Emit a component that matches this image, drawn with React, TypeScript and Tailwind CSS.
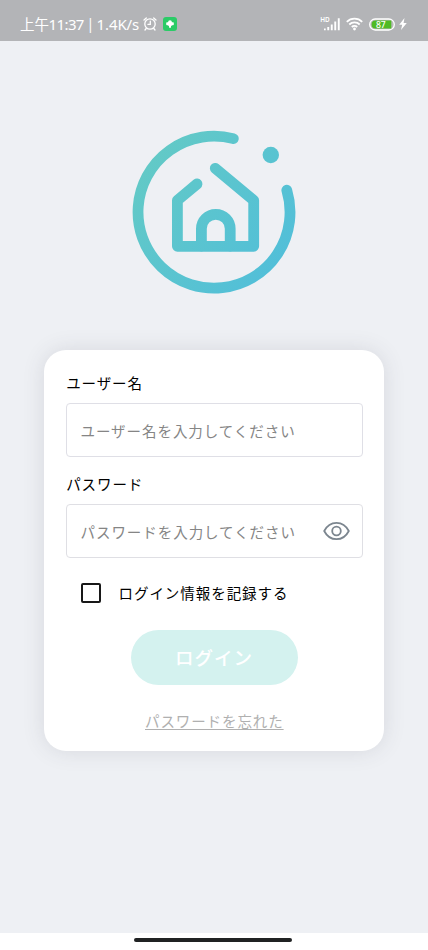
import React from "react";

function StatusBar() {
  return (
    <header className="flex h-[41px] shrink-0 items-end justify-between bg-[#b3b4b7] pr-[21px] pb-[7px] pl-5 text-white">
      <div className="flex h-5 items-center">
        <span className="flex w-[122px] items-center whitespace-nowrap font-['Noto_Sans',sans-serif] text-[15px] leading-5">
          <span className="w-[28.500px] font-['Noto_Sans_CJK_SC',sans-serif] text-[14.500px]">上午</span>
          <span className="w-[38px] tracking-[-0.6px]">11:37</span>
          <span className="w-[10px] text-[14px]">|</span>
          <span className="tracking-[-0.1px]">1.4K/s</span>
        </span>
        <svg className="ml-[1px]" width="14" height="16" viewBox="0 0 14 16" fill="none" stroke="white" strokeWidth="1.3" strokeLinecap="round">
          <circle cx="7" cy="8" r="5.2" />
          <path d="M1 4 3.3 2M13 4 10.7 2M3.2 12.5 2 14M10.8 12.5 12 14M7.3 5.2v3.2H5" />
        </svg>
        <span className="ml-[6px] flex size-[14px] items-center justify-center rounded-[3px] bg-[#2bcb67]">
          <svg width="8" height="8" viewBox="0 0 8 8" fill="white">
            <path d="M2 2.200Q2.200.300 4 .300T6 2.200H7.200Q7.800 2.200 7.800 3V4.500Q7.800 5.300 7 5.300H6Q5.800 6 5 6V7.200Q5 7.700 4.500 7.700H3.500Q3 7.700 3 7.200V6Q2.200 6 2 5.300H1Q.200 5.300.200 4.500V3Q.200 2.200 1 2.200Z" />
          </svg>
        </span>
      </div>
      <div className="flex h-5 items-center">
        <svg className="overflow-visible" width="22" height="16" viewBox="0 0 22 16" fill="white">
          <text x="0.3" y="6" fontSize="6.5" fontWeight="600" textLength="9.5" lengthAdjust="spacingAndGlyphs">HD</text>
          <path d="M4 12.500h1.700v1.700H4zM7.300 11h1.900v3.200H7.300zM10.800 8.500h1.900v5.700H10.800zM14.300 5.500h1.900v8.700H14.300zM17.800 2.200h1.900v12H17.800z" />
        </svg>
        <svg className="ml-[4px]" width="17" height="14" viewBox="0 0 17 14" fill="none" stroke="white" strokeWidth="1.8">
          <path d="M.8 4.8a11 11 0 0 1 15.4 0M3.3 7.5a7.4 7.4 0 0 1 10.4 0M5.8 10a3.8 3.8 0 0 1 5.4 0" />
          <circle cx="8.5" cy="12" r="1.4" fill="white" stroke="none" />
        </svg>
        <svg className="ml-[6px]" width="26" height="13" viewBox="0 0 26 13">
          <rect x=".7" y="1" width="24.6" height="11" rx="5.5" fill="#b8b8ba" stroke="white" strokeWidth="1.3" />
          <path d="M6.5 2.6H22.3V10.4H6.5A3.9 3.9 0 0 1 6.5 2.6Z" fill="#4fbb24" />
          <text x="7" y="9.7" fontSize="8.5" fontWeight="500" fill="white">87</text>
        </svg>
        <svg className="ml-[4px]" width="8" height="12" viewBox="0 0 8 12" fill="white">
          <path d="M5.500 0 .200 6.800h3L2 12l5.800-7H4.600Z" />
        </svg>
      </div>
    </header>
  );
}

function Logo() {
  return (
    <svg className="mx-auto mt-[89px] block shrink-0" width="164" height="164" viewBox="132 130 164 164" fill="none" stroke="url(#brand)" strokeWidth="10.8" strokeLinecap="round" strokeLinejoin="round">
      <defs>
        <linearGradient id="brand" gradientUnits="userSpaceOnUse" x1="150" y1="165" x2="278" y2="262">
          <stop offset="0" stopColor="#62c9c7" />
          <stop offset="1" stopColor="#52bfd8" />
        </linearGradient>
      </defs>
      <path d="M233.3 138.6A76 76 0 1 0 286.8 190.2" />
      <path d="M197 184 177.4 200.3V246.3H253.7V200.3L215.3 168.3" />
      <path d="M201.4 246V228.7a14.4 14.4 0 0 1 28.8 0V246" />
      <circle cx="270.8" cy="155" r="8.2" fill="url(#brand)" stroke="none" />
    </svg>
  );
}

function EyeIcon() {
  return (
    <svg width="27" height="20" viewBox="0 0 27 20" fill="none" stroke="#7c868f" strokeWidth="1.8">
      <path d="M1.2 10C4 4.500 8.200 1.800 13.500 1.800S23 4.500 25.800 10C23 15.500 18.800 18.200 13.500 18.200S4 15.500 1.200 10Z" strokeLinejoin="round" />
      <circle cx="13.5" cy="10" r="4.3" />
    </svg>
  );
}

export default function App() {
  return (
    <div className="flex h-[950px] w-[428px] flex-col overflow-hidden bg-[#eef0f4] font-['Noto_Sans','Noto_Sans_CJK_JP',sans-serif]" lang="ja">
      <StatusBar />
      <Logo />
      <main className="mt-[56px] ml-[43.5px] flex h-[401px] w-[340.500px] shrink-0 flex-col rounded-[22px] bg-white px-[22px] pt-[22px] font-['Noto_Sans_CJK_JP',sans-serif] text-[14.500px] tracking-[0.900px] shadow-[0_0_22px_rgba(60,65,80,0.13)]">
        <label htmlFor="user" className="h-[22px] pl-[0.700px] leading-[22px] text-black">ユーザー名</label>
        <input id="user" placeholder="ユーザー名を入力してください" className="mt-[9px] h-[54px] w-[297px] shrink-0 rounded-[4px] border border-[#dfdfe6] px-[14px] tracking-[0.950px] outline-none placeholder:text-[#858585]" />
        <label htmlFor="password" className="mt-[16px] h-[22px] pl-[0.700px] leading-[22px] text-black">パスワード</label>
        <div className="mt-[9px] flex h-[54px] w-[297px] shrink-0 items-center justify-between rounded-[4px] border border-[#dfdfe4] pr-3 pl-[14px]">
          <input id="password" type="password" placeholder="パスワードを入力してください" className="h-full w-[230px] tracking-[0.950px] outline-none placeholder:text-[#858585]" />
          <button aria-label="パスワードを表示"><EyeIcon /></button>
        </div>
        <label className="mt-[24px] flex h-[22px] items-center pl-[15.500px] leading-[22px] tracking-[0.950px] text-black">
          <input type="checkbox" className="mr-[17.500px] size-5 appearance-none rounded-[2px] border-2 border-[#181818]" />
          ログイン情報を記録する
        </label>
        <button className="mt-[26px] ml-[65px] h-[55px] w-[167px] shrink-0 rounded-full bg-[#d4f2ef] text-[18.500px] font-medium tracking-[1px] text-white">ログイン</button>
        <a className="mt-[25px] ml-[79.500px] h-[22px] w-fit leading-[22px] text-[#b0b0b0] underline underline-offset-[2px]">パスワードを忘れた</a>
      </main>
      <footer className="mt-auto flex h-[17px] shrink-0 justify-center bg-white pr-[3px] pt-[5px]">
        <span className="h-[4px] w-[158px] rounded-full bg-[#202223]" />
      </footer>
    </div>
  );
}
